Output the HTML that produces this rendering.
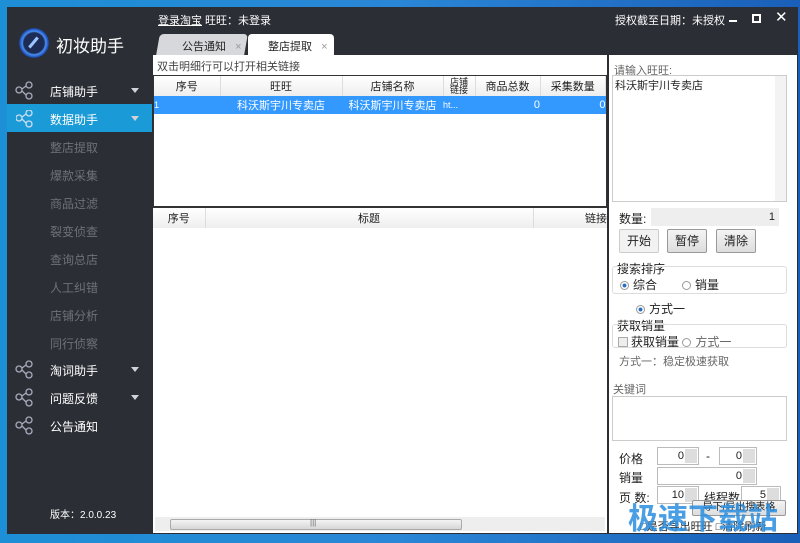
<!DOCTYPE html>
<html><head><meta charset="utf-8"><style>
*{margin:0;padding:0;box-sizing:border-box}
body{width:800px;height:543px;overflow:hidden;background:linear-gradient(90deg,#1d8fd6,#2a86d6 50%,#1a5fb8);font-family:"Liberation Sans","Noto Sans CJK SC",sans-serif;font-size:12px;color:#222;position:relative}
.a{position:absolute}
.win{left:7px;top:7px;width:791px;height:527px;background:#2b2e35}
.nav{left:7px;width:145px;height:28px;color:#fff;font-size:12px}
.nav span{position:absolute;left:43px;top:7px}
.sub{left:50px;color:#6e7278;font-size:12px}
.arrow{position:absolute;left:124px;top:12px;border:4px solid transparent;border-top:5px solid #cfd2d6}
.tabl{border-collapse:collapse;font-size:11px}
th{font-weight:normal;background:linear-gradient(#fff,#eee);border-right:1px solid #ddd;height:20px}
.rb{display:inline-block;width:9px;height:9px;border-radius:50%;border:1px solid #999;background:#fff;vertical-align:-1px;margin-right:4px}
.rb.on{background:radial-gradient(#2a6fc0 35%,#fff 45%)}
.btn{position:absolute;height:24px;border:1px solid #999;border-radius:2px;background:linear-gradient(#f4f4f4,#ddd);text-align:center;line-height:22px;font-size:12px}
.inp{position:absolute;border:1px solid #bbb;background:#fff;height:18px;text-align:right;padding-right:14px;font-size:11px;line-height:16px}
.sp{position:absolute;right:1px;top:1px;width:12px;height:14px;background:#ddd}
.gray{color:#666}
</style></head><body>
<div class="a win"></div>
<div class="a" style="left:19px;top:28px;width:30px;height:30px;border-radius:50%;background:radial-gradient(#1d2c55 48%,#4a8ff0 55%,#1b4dba 68%,#2b2e35 72%)"></div>
<div class="a" style="left:32px;top:36px;width:3px;height:13px;background:#9cc4ff;transform:rotate(40deg)"></div>
<div class="a" style="left:56px;top:32px;color:#fff;font-size:17px">初妆助手</div>
<div class="a" style="left:158px;top:12px;color:#fff;font-size:11px"><u>登录淘宝</u> 旺旺：未登录</div>
<div class="a" style="left:615px;top:12px;color:#fff;font-size:11px">授权截至日期：未授权</div>
<div class="a" style="left:729px;top:20px;width:8px;height:2px;background:#fff"></div>
<div class="a" style="left:752px;top:14px;width:9px;height:9px;border:2px solid #fff"></div>
<div class="a" style="left:775px;top:8px;color:#fff;font-size:15px">✕</div>
<div class="a" style="left:158px;top:34px;width:88px;height:21px;background:#d6d8dc;border-radius:4px 4px 0 0;transform:skewX(-10deg)"></div>
<div class="a" style="left:182px;top:38px;font-size:11px">公告通知 <span style="color:#999;margin-left:6px">×</span></div>
<div class="a" style="left:248px;top:34px;width:86px;height:21px;background:#fff;border-radius:4px 4px 0 0"></div>
<div class="a" style="left:268px;top:38px;font-size:11px">整店提取 <span style="color:#999;margin-left:6px">×</span></div>
<svg class="a" style="left:0;top:0" width="60" height="440">
<g fill="none" stroke="#aab" stroke-width="1.3">
<g transform="translate(16,82)"><circle cx="3" cy="8" r="3"/><circle cx="13" cy="3" r="3"/><circle cx="13" cy="14" r="3"/><path d="M6 7L10 4M6 9L10 13"/></g>
<g transform="translate(16,361)"><circle cx="3" cy="8" r="3"/><circle cx="13" cy="3" r="3"/><circle cx="13" cy="14" r="3"/><path d="M6 7L10 4M6 9L10 13"/></g>
<g transform="translate(16,389)"><circle cx="3" cy="8" r="3"/><circle cx="13" cy="3" r="3"/><circle cx="13" cy="14" r="3"/><path d="M6 7L10 4M6 9L10 13"/></g>
<g transform="translate(16,417)"><circle cx="3" cy="8" r="3"/><circle cx="13" cy="3" r="3"/><circle cx="13" cy="14" r="3"/><path d="M6 7L10 4M6 9L10 13"/></g>
</g></svg>
<div class="a nav" style="top:76px"><span>店铺助手</span><i class="arrow"></i></div>
<div class="a nav" style="top:104px;background:#1a9ad6"><span>数据助手</span><i class="arrow"></i></div>
<svg class="a" style="left:16px;top:110px" width="18" height="18"><g fill="none" stroke="#cde" stroke-width="1.3"><circle cx="3" cy="8" r="3"/><circle cx="13" cy="3" r="3"/><circle cx="13" cy="14" r="3"/><path d="M6 7L10 4M6 9L10 13"/></g></svg>
<div class="a sub" style="top:139px">整店提取</div>
<div class="a sub" style="top:167px">爆款采集</div>
<div class="a sub" style="top:195px">商品过滤</div>
<div class="a sub" style="top:223px">裂变侦查</div>
<div class="a sub" style="top:251px">查询总店</div>
<div class="a sub" style="top:279px">人工纠错</div>
<div class="a sub" style="top:307px">店铺分析</div>
<div class="a sub" style="top:335px">同行侦察</div>
<div class="a nav" style="top:355px"><span>淘词助手</span><i class="arrow"></i></div>
<div class="a nav" style="top:383px"><span>问题反馈</span><i class="arrow"></i></div>
<div class="a nav" style="top:411px"><span>公告通知</span></div>
<div class="a" style="left:50px;top:506px;color:#fff;font-size:10px">版本：2.0.0.23</div>
<div class="a" style="left:153px;top:55px;width:454px;height:478px;background:#fff"></div>
<div class="a" style="left:157px;top:58px;font-size:11px;color:#444">双击明细行可以打开相关链接</div>
<div class="a" style="left:153px;top:75px;width:454px;height:133px;border:1px solid #333;border-bottom:2px solid #333;background:#fff">
<table class="tabl" style="width:452px"><tr><th style="width:66px">序号</th><th style="width:122px">旺旺</th><th style="width:101px">店铺名称</th><th style="width:32px;font-size:9px;line-height:8px">店铺<br>链接</th><th style="width:65px">商品总数</th><th>采集数量</th></tr>
<tr style="background:#3399ff;color:#fff;height:18px"><td style="font-size:9px">1</td><td style="text-align:center">科沃斯宇川专卖店</td><td style="text-align:center">科沃斯宇川专卖店</td><td style="font-size:9px">ht...</td><td style="text-align:right">0</td><td style="text-align:right">0</td></tr></table></div>
<div class="a" style="left:153px;top:208px;width:454px;height:20px;border-bottom:1px solid #ddd">
<table class="tabl" style="width:454px"><tr><th style="width:52px">序号</th><th style="width:328px">标题</th><th style="text-align:right;border:0">链接</th></tr></table></div>
<div class="a" style="left:155px;top:517px;width:450px;height:14px;background:#eee"></div>
<div class="a" style="left:170px;top:519px;width:292px;height:11px;background:linear-gradient(#f4f4f4,#d6d6d6);border:1px solid #aaa;border-radius:2px"></div>
<div class="a" style="left:310px;top:518px;font-size:8px;color:#666">|||</div>
<div class="a" style="left:609px;top:55px;width:188px;height:478px;background:#fff"></div>
<div class="a gray" style="left:614px;top:62px;font-size:11px">请输入旺旺:</div>
<div class="a" style="left:612px;top:75px;width:175px;height:127px;border:1px solid #ccc;padding:1px 2px;font-size:11px">科沃斯宇川专卖店</div>
<div class="a" style="left:775px;top:76px;width:11px;height:125px;background:#f3f3f3"></div>
<div class="a" style="left:619px;top:210px">数量:</div>
<div class="a" style="left:651px;top:208px;width:128px;height:18px;background:#eee;text-align:right;padding-right:4px;font-size:11px;line-height:18px">1</div>
<div class="btn" style="left:619px;top:229px;width:40px;background:#f2f2f2;border-color:#ccc">开始</div>
<div class="btn" style="left:667px;top:229px;width:40px">暂停</div>
<div class="btn" style="left:716px;top:229px;width:40px">清除</div>
<div class="a" style="left:617px;top:260px">搜索排序</div>
<div class="a" style="left:612px;top:266px;width:175px;height:28px;border:1px solid #ddd;border-radius:3px"></div>
<div class="a" style="left:620px;top:276px"><i class="rb on"></i>综合</div>
<div class="a" style="left:682px;top:276px"><i class="rb"></i>销量</div>
<div class="a" style="left:636px;top:300px"><i class="rb on"></i>方式一</div>
<div class="a" style="left:617px;top:317px">获取销量</div>
<div class="a" style="left:612px;top:324px;width:175px;height:24px;border:1px solid #ddd;border-radius:3px"></div>
<div class="a" style="left:618px;top:333px"><i style="display:inline-block;width:10px;height:10px;border:1px solid #aaa;background:#eee;vertical-align:-1px;margin-right:3px"></i>获取销量 <span class="gray"><i class="rb"></i>方式一</span></div>
<div class="a gray" style="left:619px;top:353px;font-size:11px">方式一：稳定极速获取</div>
<div class="a gray" style="left:613px;top:381px;font-size:11px">关键词</div>
<div class="a" style="left:612px;top:396px;width:175px;height:45px;border:1px solid #ccc"></div>
<div class="a" style="left:619px;top:450px">价格</div>
<div class="inp" style="left:657px;top:447px;width:42px">0<i class="sp"></i></div>
<div class="a" style="left:706px;top:449px">-</div>
<div class="inp" style="left:719px;top:447px;width:38px">0<i class="sp"></i></div>
<div class="a" style="left:619px;top:469px">销量</div>
<div class="inp" style="left:657px;top:467px;width:100px">0<i class="sp"></i></div>
<div class="a" style="left:619px;top:489px">页 数:</div>
<div class="inp" style="left:657px;top:486px;width:42px">10<i class="sp"></i></div>
<div class="a" style="left:704px;top:489px">线程数</div>
<div class="inp" style="left:741px;top:486px;width:40px">5<i class="sp"></i></div>
<div class="btn" style="left:692px;top:500px;width:94px;height:16px;line-height:14px;font-size:10px">导下/导出搜表格</div>
<div class="a" style="left:640px;top:518px;font-size:11px">□是否导出旺旺 □清除刷新</div>
<div class="a" style="left:628px;top:494px;color:#2b8fe0;font-size:30px;font-weight:bold;opacity:.85">极速下载站</div>
</body></html>
